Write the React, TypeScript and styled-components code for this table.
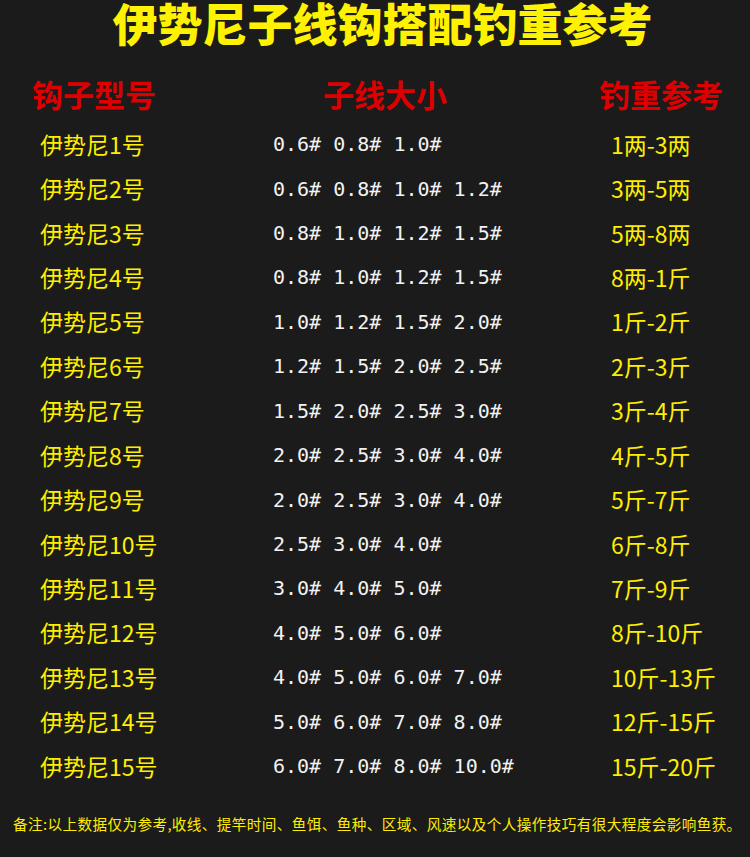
import React from "react";
import styled, { createGlobalStyle } from "styled-components";

const GlobalStyle = createGlobalStyle`
  html, body {
    margin: 0;
    padding: 0;
    background: #1b1b1b;
  }
`;

const Page = styled.div`
  width: 750px;
  height: 857px;
  background: #1b1b1b;
  font-family: "Noto Sans CJK SC", "Noto Sans", sans-serif;
  display: flex;
  flex-direction: column;
  overflow: hidden;
`;

const Title = styled.h1`
  margin: 0;
  padding: 0 0 0 15px;
  height: 46px;
  display: flex;
  align-items: center;
  justify-content: center;
  color: #fff200;
  font-size: 45px;
  font-weight: 900;
  line-height: 46px;
  letter-spacing: 0;
`;

const HeadRow = styled.div`
  display: grid;
  grid-template-columns: 291px 276px 1fr;
  padding: 0 0 0 32px;
  margin-top: 31px;
  height: 32px;
  align-items: center;
`;

const HeadCell = styled.div`
  color: #dc0000;
  font-size: 31px;
  font-weight: 700;
  line-height: 1;
`;

const Table = styled.div`
  display: grid;
  grid-template-columns: 233px 338px 1fr;
  grid-auto-rows: 44.43px;
  padding: 0 0 0 40px;
  margin-top: 13px;
  align-items: center;
`;

const Model = styled.div<{ $tone?: string }>`
  color: ${(p) => p.$tone || "#ffee00"};
  font-size: 23px;
  line-height: 1;
`;

const Lines = styled.div`
  color: #f2f2f2;
  font-family: "DejaVu Sans Mono", "Liberation Mono", monospace;
  font-size: 20px;
  line-height: 1;
  white-space: pre;
`;

const Note = styled.p`
  margin: 29px 0 0;
  padding: 0 0 0 13px;
  color: #ffee00;
  font-size: 14.6px;
  letter-spacing: 0.4px;
  line-height: 1;
  white-space: nowrap;
`;

type Row = { model: string; lines: string; weight: string };

const rows: Row[] = [
  { model: "伊势尼1号", lines: "0.6# 0.8# 1.0#", weight: "1两-3两" },
  { model: "伊势尼2号", lines: "0.6# 0.8# 1.0# 1.2#", weight: "3两-5两" },
  { model: "伊势尼3号", lines: "0.8# 1.0# 1.2# 1.5#", weight: "5两-8两" },
  { model: "伊势尼4号", lines: "0.8# 1.0# 1.2# 1.5#", weight: "8两-1斤" },
  { model: "伊势尼5号", lines: "1.0# 1.2# 1.5# 2.0#", weight: "1斤-2斤" },
  { model: "伊势尼6号", lines: "1.2# 1.5# 2.0# 2.5#", weight: "2斤-3斤" },
  { model: "伊势尼7号", lines: "1.5# 2.0# 2.5# 3.0#", weight: "3斤-4斤" },
  { model: "伊势尼8号", lines: "2.0# 2.5# 3.0# 4.0#", weight: "4斤-5斤" },
  { model: "伊势尼9号", lines: "2.0# 2.5# 3.0# 4.0#", weight: "5斤-7斤" },
  { model: "伊势尼10号", lines: "2.5# 3.0# 4.0#", weight: "6斤-8斤" },
  { model: "伊势尼11号", lines: "3.0# 4.0# 5.0#", weight: "7斤-9斤" },
  { model: "伊势尼12号", lines: "4.0# 5.0# 6.0#", weight: "8斤-10斤" },
  { model: "伊势尼13号", lines: "4.0# 5.0# 6.0# 7.0#", weight: "10斤-13斤" },
  { model: "伊势尼14号", lines: "5.0# 6.0# 7.0# 8.0#", weight: "12斤-15斤" },
  { model: "伊势尼15号", lines: "6.0# 7.0# 8.0# 10.0#", weight: "15斤-20斤" },
];

const App = () => {
  return (
    <Page>
      <GlobalStyle />
      <Title>伊势尼子线钩搭配钓重参考</Title>
      <HeadRow>
        <HeadCell>钩子型号</HeadCell>
        <HeadCell>子线大小</HeadCell>
        <HeadCell>钓重参考</HeadCell>
      </HeadRow>
      <Table>
        {rows.map((r) => (
          <React.Fragment key={r.model}>
            <Model>{r.model}</Model>
            <Lines>{r.lines}</Lines>
            <Model>{r.weight}</Model>
          </React.Fragment>
        ))}
      </Table>
      <Note>
        备注:以上数据仅为参考,收线、提竿时间、鱼饵、鱼种、区域、风速以及个人操作技巧有很大程度会影响鱼获。
      </Note>
    </Page>
  );
};

export default App;
